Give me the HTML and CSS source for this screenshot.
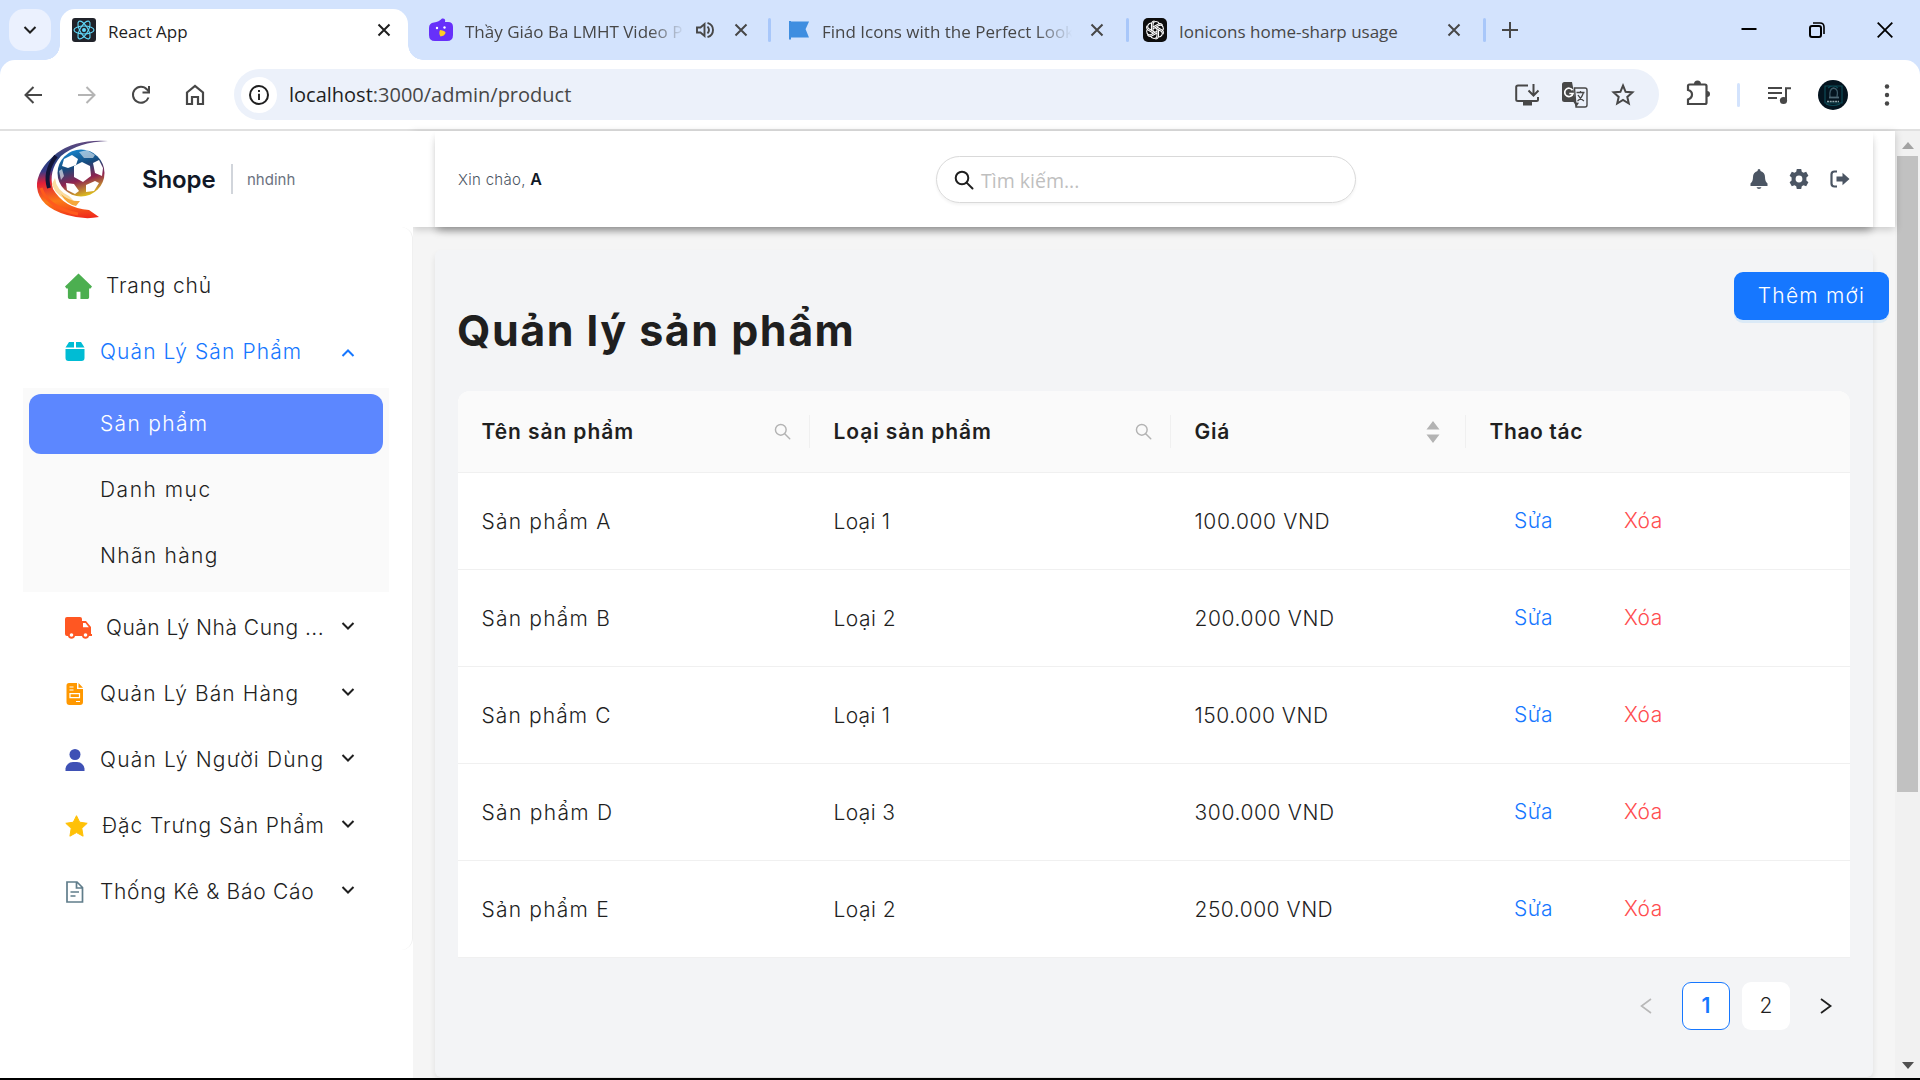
FILE: index.html
```html
<!DOCTYPE html>
<html lang="vi">
<head>
<meta charset="utf-8">
<title>React App</title>
<link rel="stylesheet" href="styles.css">
</head>
<body>
<svg class="defs" aria-hidden="true">
  <symbol id="close" viewBox="0 0 14 14"><path d="M1.5 1.5l11 11M12.5 1.5l-11 11" fill="none" stroke="currentColor" stroke-width="2"/></symbol>
  <symbol id="down" viewBox="0 0 14 10"><path d="M1.5 2l5.5 5.5L12.500 2" fill="none" stroke="currentColor" stroke-width="2"/></symbol>
  <symbol id="lens" viewBox="0 0 20 20"><circle cx="8" cy="8" r="6.300" fill="none" stroke="currentColor" stroke-width="var(--w,2)"/><path d="M12.600 12.600L18.500 18.500" stroke="currentColor" stroke-width="var(--w,2)" stroke-linecap="round"/></symbol>
</svg>

<header class="tabstrip">
  <div class="tab-search"><svg width="14" height="10"><use href="#down"/></svg></div>
  <div class="tab tab-active">
    <svg class="fav" width="24" height="24" viewBox="0 0 24 24"><rect width="24" height="24" rx="3" fill="#20232a"/><g fill="none" stroke="#61dafb" stroke-width="1.100"><ellipse cx="12" cy="12" rx="10" ry="4"/><ellipse cx="12" cy="12" rx="10" ry="4" transform="rotate(60 12 12)"/><ellipse cx="12" cy="12" rx="10" ry="4" transform="rotate(120 12 12)"/></g><circle cx="12" cy="12" r="2" fill="#61dafb"/></svg>
    <span class="tab-title">React App</span>
    <svg class="tab-close" width="14" height="14"><use href="#close"/></svg>
  </div>
  <div class="tab tab-two">
    <svg class="fav" width="24" height="24" viewBox="0 0 24 24"><path d="M5 4.500Q10 4 13 0.500Q17 0 16 4h3q5 0 5 5v8q0 6-6 6H6q-6 0-6-6v-7q0-5 5-5.500z" fill="#6730fa"/><path d="M11 12q6 1 5.500 3-1 3-5 3.500-2-3-.5-6.500z" fill="#ffcf24"/><circle cx="8" cy="10" r="1.200" fill="#fff"/><circle cx="15.500" cy="9.500" r="1.200" fill="#fff"/></svg>
    <span class="tab-title tab-faded">Thầy Giáo Ba LMHT Video P</span>
    <svg class="speaker" width="20" height="18" viewBox="0 0 20 18"><path d="M2 6.500h3.500L9.500 3v12l-4-3.500H2z" fill="none" stroke="#474747" stroke-width="1.900"/><path d="M12.500 5.500q3 3.500 0 7M12.500 1.800q5.500 1.700 5.500 7.200t-5.500 7.200" fill="none" stroke="#474747" stroke-width="1.900"/></svg>
    <svg class="tab-close" width="14" height="14"><use href="#close"/></svg>
  </div>
  <i class="tab-sep"></i>
  <div class="tab tab-three">
    <svg class="fav" width="19" height="20" viewBox="0 0 19 20"><path d="M1 1v18.500M1.500 2.500H18.500l-3 6.500 3 7.500H1.500z" fill="#3f8ee0" stroke="#3f8ee0" stroke-width="2"/></svg>
    <span class="tab-title tab-faded">Find Icons with the Perfect Look</span>
    <svg class="tab-close" width="14" height="14"><use href="#close"/></svg>
  </div>
  <i class="tab-sep"></i>
  <div class="tab tab-four">
    <svg class="fav" width="24" height="24" viewBox="0 0 24 24"><rect width="24" height="24" rx="5" fill="#0d0d0d"/><g fill="none" stroke="#fff" stroke-width="1.100"><path id="petal" d="M10 13V7Q10 3.500 13 3.500q2.500 0 3.500 2.500M10 9l5-2.800q3-1.500 4.600 1"/><use href="#petal" transform="rotate(60 12 12)"/><use href="#petal" transform="rotate(120 12 12)"/><use href="#petal" transform="rotate(180 12 12)"/><use href="#petal" transform="rotate(240 12 12)"/><use href="#petal" transform="rotate(300 12 12)"/></g></svg>
    <span class="tab-title">Ionicons home-sharp usage</span>
    <svg class="tab-close" width="14" height="14"><use href="#close"/></svg>
  </div>
  <i class="tab-sep"></i>
  <svg class="new-tab" width="16" height="16" viewBox="0 0 16 16"><path d="M8 0v16M0 8h16" stroke="#474747" stroke-width="2"/></svg>
  <div class="window-controls">
    <span><svg width="16" height="16" viewBox="0 0 16 16"><path d="M0.500 7h15" stroke="#000" stroke-width="2"/></svg></span>
    <span><svg width="16" height="16" viewBox="0 0 16 16"><rect x="1" y="4" width="11" height="11" rx="2" fill="none" stroke="#000" stroke-width="2"/><path d="M4 1h7q4 0 4 4v7" fill="none" stroke="#000" stroke-width="1.600"/></svg></span>
    <span><svg width="16" height="16" viewBox="0 0 16 16"><path d="M.7.7l14.600 14.600M15.300.7L.7 15.300" stroke="#000" stroke-width="1.800"/></svg></span>
  </div>
</header>

<nav class="toolbar">
  <span class="tool"><svg width="18" height="18" viewBox="0 0 18 18"><path d="M18 9H2M9.500 1L1.500 9l8 8" fill="none" stroke="#474747" stroke-width="2"/></svg></span>
  <span class="tool tool-off"><svg width="18" height="18" viewBox="0 0 18 18"><path d="M0 9h16M8.500 1l8 8-8 8" fill="none" stroke="#474747" stroke-width="2"/></svg></span>
  <span class="tool"><svg width="20" height="20" viewBox="0 0 20 20"><path d="M17.500 12.500A8 8 0 1 1 16 4.500L18 7" fill="none" stroke="#474747" stroke-width="2"/><path d="M18 1v6.500h-6.500" fill="none" stroke="#474747" stroke-width="2"/></svg></span>
  <span class="tool"><svg width="20" height="22" viewBox="0 0 20 22"><path d="M2 8.500L10 2l8 6.500V20h-5v-7H7v7H2z" fill="none" stroke="#474747" stroke-width="2.200"/></svg></span>
  <div class="omnibox">
    <span class="site-info"><svg width="20" height="20" viewBox="0 0 20 20"><circle cx="10" cy="10" r="9" fill="none" stroke="#1f1f1f" stroke-width="2"/><path d="M10 8.700V15M10 5v2" stroke="#1f1f1f" stroke-width="1.900"/></svg></span>
    <span class="url"><b>localhost</b>:3000/admin/product</span>
    <span class="omni-icon"><svg width="24" height="22" viewBox="0 0 24 22"><path d="M13 1.500H3Q1.200 1.500 1.200 3v12.500Q1.200 17 3 17h18.500q1.500 0 1.500-1.500V13M18.500 0v11M13.500 6.500l5 5 5-5" fill="none" stroke="#474747" stroke-width="2"/><path d="M8 18h9v3.500H8z" fill="#474747"/></svg></span>
    <span class="omni-icon"><svg width="26" height="26" viewBox="0 0 26 26"><path d="M12.500 6H23q2 0 2 2v15q0 2-2 2H14z" fill="none" stroke="#474747" stroke-width="1.400"/><path d="M14.500 10.500h8M18.500 9v1.500M21.500 10.500q-2 6-6 8.500M16 13q2 4 6 6" fill="none" stroke="#474747" stroke-width="1.300"/><path d="M2.500 0H10l4 20.500 3 .3-2.500 4-3-4.800h-9Q0 20 0 17.500v-15Q0 0 2.500 0z" fill="#474747"/><path d="M10.500 8.200A4.200 4.200 0 1 0 11 11.500H7.300" fill="none" stroke="#fff" stroke-width="1.700"/></svg></span>
    <span class="omni-icon"><svg width="24" height="23" viewBox="0 0 24 23"><path d="M12 2.500l2.600 6.300 6.800.6-5.100 4.500 1.500 6.600-5.800-3.500-5.800 3.500 1.500-6.600-5.100-4.500 6.800-.6z" fill="none" stroke="#474747" stroke-width="2"/></svg></span>
  </div>
  <span class="tool tool-ext"><svg width="24" height="26" viewBox="1 1.500 24 26"><path d="M3 5.500Q3 4 4.500 4H20q1.500 0 1.500 1.500V22q0 1.500-1.500 1.500H3V19q4-1.500 4-5t-4-4.500z" fill="none" stroke="#474747" stroke-width="2.200"/><path d="M9 3.500a3.500 3.500 0 0 1 7 0zM22 10.500a3 3 0 0 1 0 6z" fill="#474747"/></svg></span>
  <i class="tool-sep"></i>
  <span class="tool"><svg width="22" height="22" viewBox="0 -1 22 22"><path d="M0 3h14M0 8h14M0 13h9M18 16V3.200h5" fill="none" stroke="#474747" stroke-width="2"/><circle cx="15.500" cy="15.500" r="3.600" fill="#474747"/></svg></span>
  <span class="tool"><svg width="30" height="30" viewBox="0 0 30 30"><circle cx="15" cy="15" r="15" fill="#04141f"/><path d="M7 6h17v17H7zM10 8q5-4 10 0M8 24q7 3 14 0" fill="none" stroke="#0d4a56" stroke-width="1.200"/><path d="M12 17q-1-8 3.500-9Q21 9 19 17" fill="none" stroke="#3d5b68" stroke-width="1.300"/><path d="M11 17.500h10" stroke="#4c6673" stroke-width="1.800"/><path d="M9 21.500h12" stroke="#8fa6ac" stroke-width="1.400" stroke-dasharray="2 .7"/></svg></span>
  <span class="tool"><svg width="6" height="22" viewBox="0 0 6 22"><g fill="#474747"><circle cx="3" cy="2.500" r="2.200"/><circle cx="3" cy="11" r="2.200"/><circle cx="3" cy="19.500" r="2.200"/></g></svg></span>
</nav>

<div class="viewport">
  <aside class="sidebar">
    <div class="brand">
      <svg class="logo" width="76" height="82" viewBox="0 0 76 82">
        <defs>
          <linearGradient id="sw" x1=".5" y1="0" x2=".6" y2="1"><stop offset="0" stop-color="#6b4a80"/><stop offset=".2" stop-color="#27407f"/><stop offset=".35" stop-color="#3a3a86"/><stop offset=".5" stop-color="#e01f38"/><stop offset=".75" stop-color="#fb7a16"/><stop offset="1" stop-color="#f02c1c"/></linearGradient>
          <linearGradient id="bl" x1=".3" y1="0" x2=".6" y2="1"><stop offset="0" stop-color="#1787cf"/><stop offset=".35" stop-color="#164a7c"/><stop offset=".65" stop-color="#8e2350"/><stop offset="1" stop-color="#e0c51c"/></linearGradient>
        </defs>
        <path d="M72 3Q40 1 21 15Q0 32 1 49Q3 69 31 77Q48 82 63 79L53 72Q28 70 17 51Q12 33 25 18Q42 4 72 3z" fill="url(#sw)"/>
        <path d="M20 18Q8 34 13 50" fill="none" stroke="#111437" stroke-width="4"/>
        <path d="M5 50Q12 70 42 76" fill="none" stroke="#ff5a1c" stroke-width="3"/>
        <path d="M16 46Q20 60 41 66L33 58Q20 52 19 40z" fill="#fbdca0"/>
        <path d="M25 56Q34 64 44 63L40 68Q30 66 25 56z" fill="#f5a73a"/>
        <circle cx="45" cy="35" r="23.500" fill="url(#bl)"/>
        <g fill="#fff" transform="translate(-1 1)"><path d="M39 27l8-4 8 4 1 10-8 6-9-5z"/><path d="M29 20l8-4 6 4-2 6-8 3-6-2z"/><path d="M58 24l6-3 4 8-1 8-7-3z"/><path d="M44 13l8-2 8 5-2 3-9 0z" opacity=".55"/><path d="M31 44l8 1 5 7-4 3-8-4z"/><path d="M51 46l9-4 4 2-5 8-8 1z"/><path d="M24 32l3-2 2 7-3 4z" opacity=".6"/></g>
      </svg>
      <strong class="brand-name">Shope</strong>
      <span class="brand-user">nhdinh</span>
    </div>
    <ul class="menu">
      <li class="item home"><svg width="28" height="27" viewBox="0 0 28 27"><path d="M14 0l14 13.500-1.500 2H25V25q0 1.500-1.500 1.500H16V19h-4v7.500H4.500Q3 26.500 3 25v-9.500H1.500L0 13.500z" fill="#4caf50"/></svg><span class="label k8">Trang chủ</span></li>
      <li class="item open"><svg width="20" height="20" viewBox="0 0 20 20"><path d="M4 0h5v5.500H.5zM11 0h5l3.500 5.500H11zM.5 7h19v9q0 3-3 3h-13q-3 0-3-3z" fill="#00bcd4"/></svg><span class="label k11">Quản Lý Sản Phẩm</span><svg class="chev up" width="14" height="10"><use href="#down"/></svg></li>
      <li class="submenu">
        <div class="sub selected k13">Sản phẩm</div>
        <div class="sub k15">Danh mục</div>
        <div class="sub k13">Nhãn hàng</div>
      </li>
      <li class="item truck"><svg width="27" height="22" viewBox="0 0 27 22"><path d="M2 0h13q2 0 2 2v2h4l5 6v7h1v2h-3a3.600 3.600 0 0 1-7 0h-7a3.600 3.600 0 0 1-7 0H2q-2 0-2-2V2q0-2 2-2z" fill="#ff5722"/><path d="M18 6h2.500l3.300 4.300H18z" fill="#fff"/><circle cx="6.500" cy="18" r="1.800" fill="#fff"/><circle cx="20.500" cy="18" r="1.800" fill="#fff"/></svg><span class="label k5">Quản Lý Nhà Cung ...</span><svg class="chev" width="14" height="10"><use href="#down"/></svg></li>
      <li class="item"><svg width="20" height="22" viewBox="0 0 20 22"><path d="M4 0h8v6h6v13q0 3-3 3H4.500q-3 0-3-3V2.500Q1.500 0 4 0zM13.500 0L18 4.800h-4.500z" fill="#ff9800"/><path d="M4.500 4h4M4.500 7h4M11 18.500h4M5 10.700h9.500v4H5z" fill="none" stroke="#fff" stroke-width="1.200"/></svg><span class="label k11">Quản Lý Bán Hàng</span><svg class="chev" width="14" height="10"><use href="#down"/></svg></li>
      <li class="item"><svg width="20" height="22" viewBox="0 0 20 22"><circle cx="10" cy="5.500" r="5.500" fill="#3f51b5"/><path d="M.5 22v-2.500Q2 13 8 13h4q6 0 7.500 6.500V22z" fill="#3f51b5"/></svg><span class="label k12">Quản Lý Người Dùng</span><svg class="chev" width="14" height="10"><use href="#down"/></svg></li>
      <li class="item star"><svg width="23" height="22" viewBox="0 0 23 22"><path d="M11.500 0.700l3.200 6.500 7.500 1.100-5.400 5 1.300 7.900-6.600-3.600-6.600 3.600 1.300-7.900-5.400-5 7.500-1.100z" fill="#ffc107" stroke="#ffc107" stroke-linejoin="round"/></svg><span class="label k9">Đặc Trưng Sản Phẩm</span><svg class="chev" width="14" height="10"><use href="#down"/></svg></li>
      <li class="item"><svg width="20" height="22" viewBox="0 0 20 22"><path d="M2 1h10l5.500 5.500V21H2zM11.500 1v6h6M5.500 11h8.500M5.500 15h5" fill="none" stroke="#607d8b" stroke-width="1.700"/></svg><span class="label k7">Thống Kê &amp; Báo Cáo</span><svg class="chev" width="14" height="10"><use href="#down"/></svg></li>
    </ul>
  </aside>

  <div class="main">
    <div class="topbar">
      <div class="topbar-card">
        <div class="hello">Xin chào, <b>A</b></div>
        <div class="search"><svg width="20" height="20"><use href="#lens"/></svg><span>Tìm kiếm...</span></div>
        <div class="actions">
          <svg width="18" height="20" viewBox="0 0 18 20"><path d="M9 0q1.500 0 1.500 2Q15 3.500 15 8q0 4.500 2.500 6.500V17H.5v-2.500Q3 12.500 3 8q0-4.500 4.500-6Q7.500 0 9 0zM6.500 18.300h5Q11 20 9 20t-2.500-1.700z"/></svg>
          <svg width="20" height="20" viewBox="0 0 20 20"><path fill-rule="evenodd" d="M7.800 0h4.400l.6 2.700 1.700 1 2.700-.9 2.200 3.900-2 1.900v2.800l2 1.900-2.200 3.900-2.700-.9-1.700 1-.6 2.700H7.800l-.6-2.700-1.700-1-2.700.9-2.200-3.900 2-1.900V8.600l-2-1.900 2.200-3.900 2.700.9 1.700-1zM10 6.600a3.400 3.400 0 1 0 0 6.800 3.400 3.400 0 0 0 0-6.800z"/></svg>
          <svg width="20" height="18" viewBox="0 0 20 18"><path d="M7 1.500H4.500q-3 0-3 3v9q0 3 3 3H7" fill="none" stroke="#4b5563" stroke-width="2.200"/><path d="M6.500 6.500h6V2.700L19.500 9l-7 6.300v-3.800h-6z"/></svg>
        </div>
      </div>
    </div>
    <div class="content">
      <section class="card">
        <button class="add">Thêm mới</button>
        <h1 class="title">Quản lý sản phẩm</h1>
        <div class="table">
          <div class="row head">
            <div class="cell"><span class="k9">Tên sản phẩm</span><svg class="filter" width="17" height="17"><use href="#lens"/></svg></div>
            <div class="cell"><span class="k9">Loại sản phẩm</span><svg class="filter" width="17" height="17"><use href="#lens"/></svg></div>
            <div class="cell"><span class="k7">Giá</span><svg class="sorter" width="14" height="22" viewBox="0 0 14 22"><path d="M7 0l6.500 8.500H.5zM7 22l6.500-8.500H.5z" fill="#b3b3b3"/></svg></div>
            <div class="cell"><span class="k6">Thao tác</span></div>
          </div>
          <div class="row"><div class="cell k12">Sản phẩm A</div><div class="cell k3">Loại 1</div><div class="cell k6">100.000 VND</div><div class="cell links"><a class="edit">Sửa</a><a class="del">Xóa</a></div></div>
          <div class="row"><div class="cell k12">Sản phẩm B</div><div class="cell k5">Loại 2</div><div class="cell k6">200.000 VND</div><div class="cell links"><a class="edit">Sửa</a><a class="del">Xóa</a></div></div>
          <div class="row"><div class="cell k11">Sản phẩm C</div><div class="cell k3">Loại 1</div><div class="cell k5">150.000 VND</div><div class="cell links"><a class="edit">Sửa</a><a class="del">Xóa</a></div></div>
          <div class="row"><div class="cell k13">Sản phẩm D</div><div class="cell k4">Loại 3</div><div class="cell k6">300.000 VND</div><div class="cell links"><a class="edit">Sửa</a><a class="del">Xóa</a></div></div>
          <div class="row"><div class="cell k12">Sản phẩm E</div><div class="cell k5">Loại 2</div><div class="cell k5">250.000 VND</div><div class="cell links"><a class="edit">Sửa</a><a class="del">Xóa</a></div></div>
        </div>
        <div class="pager">
          <span class="page arrow off"><svg width="12" height="16" viewBox="0 0 12 16"><path d="M11 1L1.500 8 11 15" fill="none" stroke="currentColor" stroke-width="1.600"/></svg></span>
          <span class="page current">1</span>
          <span class="page">2</span>
          <span class="page arrow"><svg width="12" height="16" viewBox="0 0 12 16"><path d="M1 1l9.500 7L1 15" fill="none" stroke="currentColor" stroke-width="1.800"/></svg></span>
        </div>
      </section>
    </div>
  </div>

  <div class="scrollbar">
    <svg width="12" height="7" viewBox="0 0 12 7"><path d="M6 0l6 7H0z" fill="#a3a3a3"/></svg>
    <i class="thumb"></i>
    <svg class="sb-down" width="12" height="7" viewBox="0 0 12 7"><path d="M6 7L0 0h12z" fill="#505050"/></svg>
  </div>
</div>
</body>
</html>
```
FILE: styles.css
```css
* { box-sizing: border-box; }
body {
  margin: 0;
  width: 1920px;
  height: 1080px;
  overflow: hidden;
  display: flex;
  flex-direction: column;
  background: #000;
  color: #1f1f1f;
  font: 350 21px/30px Inter, "Open Sans", sans-serif;
}
.defs { display: none; }
svg { flex: none; display: block; overflow: visible; }

/* letter tracking steps, in tenths of a pixel */
.k3 { letter-spacing: .3px; }
.k4 { letter-spacing: .4px; }
.k5 { letter-spacing: .5px; }
.k6 { letter-spacing: .6px; }
.k7 { letter-spacing: .7px; }
.k8 { letter-spacing: .8px; }
.k9 { letter-spacing: .92px; }
.k11 { letter-spacing: 1.1px; }
.k12 { letter-spacing: 1.2px; }
.k13 { letter-spacing: 1.3px; }
.k15 { letter-spacing: 1.5px; }

/* browser tabs */
.tabstrip {
  height: 60px;
  flex: none;
  display: flex;
  align-items: center;
  background: #d3e3fd;
  font: 400 17px/24px "Open Sans", sans-serif;
  color: #474747;
}
.tab-search {
  width: 42px;
  height: 42px;
  margin: 0 9px;
  border-radius: 15px;
  background: #ebf1fe;
  display: grid;
  place-items: center;
  color: #1f1f1f;
}
.tab { display: flex; align-items: center; height: 51px; padding-bottom: 9px; align-self: flex-end; }
.tab-active {
  position: relative;
  width: 348px;
  padding-left: 12px;
  background: #fff;
  border-radius: 15px 15px 0 0;
  color: #1f1f1f;
}
.tab-active::before, .tab-active::after {
  content: "";
  position: absolute;
  bottom: 0;
  width: 15px;
  height: 15px;
}
.tab-active::before { left: -15px; background: radial-gradient(circle at 0 0, transparent 14.5px, #fff 15px); }
.tab-active::after { right: -15px; background: radial-gradient(circle at 100% 0, transparent 14.5px, #fff 15px); }
.tab-two { width: 360px; padding-left: 21px; }
.tab-three { width: 355px; padding-left: 18px; }
.tab-four { width: 354px; padding-left: 14px; }
.tab-title { flex: 1; margin-left: 12px; white-space: nowrap; padding-top: 3px; min-width: 0; }
.tab-three .tab-title { margin-left: 14px; }
.tab-faded { mask-image: linear-gradient(90deg, #000 calc(100% - 36px), transparent); }
.tab-close { margin: 0 17px 0 16px; }
.tab-three .tab-close { margin: 0 22px 0 16px; }
.tab-three .tab-title { margin-right: 2px; }
.tab-two .tab-close { margin: 0 20px 0 19px; }
.tab-four .tab-close { margin-right: 22px; }
.speaker { margin-left: 10px; }
.tab-sep { width: 3px; height: 24px; border-radius: 2px; background: #a8c7fa; }
.new-tab { margin-left: 16px; }
.window-controls { margin-left: auto; margin-right: 1px; display: flex; }
.window-controls span { width: 68px; display: grid; place-items: center; }

/* address row */
.toolbar {
  position: relative;
  height: 71px;
  flex: none;
  display: flex;
  align-items: center;
  padding-left: 6px;
  background: #d3e3fd;
  border-bottom: 2px solid #e0e0e0;
}
.toolbar::before {
  content: "";
  position: absolute;
  inset: 0;
  background: #fff;
  border-radius: 15px 15px 0 0;
}
.toolbar > * { position: relative; }
.tool { width: 54px; display: grid; place-items: center; }
.tool-off { opacity: .4; }
.omnibox {
  width: 1425px;
  height: 51px;
  margin: 0 12px;
  padding: 0 12px 0 7px;
  border-radius: 26px;
  background: #ecf1fa;
  display: flex;
  align-items: center;
}
.site-info { width: 36px; height: 36px; border-radius: 50%; background: #fff; display: grid; place-items: center; }
.url { flex: 1; margin-left: 12px; font: 400 20px/30px "Open Sans", sans-serif; color: #474747; }
.url b { font-weight: 400; color: #1f1f1f; }
.omni-icon { width: 48px; display: grid; place-items: center; }
.tool-sep { width: 3px; height: 24px; margin: 0 12px; background: #d3e3fd; border-radius: 2px; }

/* page */
.viewport { height: 947px; display: flex; background: #f5f5f5; }
.sidebar { position: relative; z-index: 2; width: 413px; background: #fff; }
.brand { height: 96px; display: flex; align-items: center; padding-left: 36px; }
.brand-name { width: 89px; margin-left: 30px; padding-top: 1px; font-size: 24px; font-weight: 600; color: #111827; letter-spacing: -.1px; }
.brand-user {
  height: 30px;
  padding-left: 14px;
  border-left: 2px solid #d1d5db;
  font-size: 15px;
  line-height: 31px;
  font-weight: 400;
  color: #6b7280;
}
.menu {
  list-style: none;
  height: 723px;
  margin: 0;
  padding: 29px 23px 0;
  border-right: 1px solid #f0f0f0;
  border-radius: 0 12px 12px 0;
}
.item { position: relative; height: 60px; margin-bottom: 6px; padding: 0 34px 0 42px; display: flex; align-items: center; }
.item .label { margin-left: 15px; white-space: nowrap; }
.home, .truck { padding-left: 42px; }
.home svg { width: 27px; }
.home .label { margin-left: 14px; }
.truck .label { margin-left: 14px; }
.star .label { margin-left: 14px; }
.chev { margin-left: auto; position: relative; top: -2px; }
.chev.up { transform: rotate(180deg); top: 1px; }
.open { color: #1677ff; }
.submenu { padding: 6px; margin-bottom: 6px; background: #fafafa; display: grid; gap: 6px; }
.sub { height: 60px; padding-left: 71px; line-height: 60px; border-radius: 12px; }
.selected { background: #5c87ff; color: #fff; }

.main { width: 1482px; display: flex; flex-direction: column; }
.topbar { position: relative; z-index: 1; height: 96px; flex: none; padding: 0 22px; background: #fff; box-shadow: 0 2px 8px rgba(0, 0, 0, .2); }
.topbar-card {
  height: 96px;
  padding: 0 23px;
  display: grid;
  grid-template-columns: 478px 420px 1fr;
  align-items: center;
  background: #fff;
  box-shadow: 0 6px 9px -3px rgba(0, 0, 0, .3), 0 4px 6px rgba(0, 0, 0, .06);
  clip-path: inset(0 -10px -18px -10px);
}
.hello { font-size: 15px; color: #4b5563; letter-spacing: .3px; }
.hello b { font-weight: 600; font-size: 16px; color: #111827; }
.search {
  height: 47px;
  margin-top: 1px;
  padding-left: 17px;
  border: 1px solid #d9d9d9;
  border-radius: 24px;
  box-shadow: 0 2px 3px rgba(0, 0, 0, .05);
  display: flex;
  align-items: center;
  gap: 7px;
  font: 400 19.5px/30px "Open Sans", sans-serif;
  color: #bfbfbf;
}
.search span { padding-top: 2px; }
.search svg { color: #1f1f1f; }
.actions { display: flex; justify-content: flex-end; align-items: center; gap: 21px; color: #4b5563; fill: #4b5563; }

.content { flex: 1; padding: 23px 22px 0; }
.card {
  position: relative;
  height: 827px;
  padding: 55px 23px 0;
  background: #f3f4f6;
  border-radius: 6px;
  box-shadow: 0 4px 6px rgba(0, 0, 0, .09);
}
.add {
  position: absolute;
  right: -16px;
  top: 22px;
  width: 155px;
  height: 48px;
  padding: 0;
  border: 0;
  border-radius: 9px;
  background: #1677ff;
  box-shadow: 0 3px 0 rgba(5, 145, 255, .1);
  color: #fff;
  font: inherit;
  letter-spacing: 1.2px;
}
.title { margin: 0; height: 86px; font-size: 43px; line-height: 51px; font-weight: 700; letter-spacing: 1.5px; text-indent: -1px; }
.table { width: 1392px; background: #fff; border-radius: 12px 12px 0 0; overflow: hidden; }
.row { display: grid; grid-template-columns: 352px 361px 295px 384px; height: 97px; border-bottom: 1px solid #f0f0f0; }
.cell { padding: 2px 24px 0 23.5px; display: flex; align-items: center; }
.head { height: 82px; background: #fafafa; font-weight: 600; }
.head .cell { position: relative; padding-top: 0; justify-content: space-between; padding-right: 19px; }
.head .cell:not(:last-child)::after { content: ""; position: absolute; right: 0; width: 1px; height: 33px; background: #f0f0f0; }
.filter { --w: 1.7; color: #b3b3b3; }
.head .cell:nth-child(3) { padding-right: 26px; }
.cell.links { padding: 0 0 0 48px; gap: 71px; letter-spacing: .4px; }
.edit { color: #1677ff; }
.del { color: #ff4d4f; }
.pager { margin-top: 24px; display: flex; justify-content: flex-end; gap: 12px; }
.page { width: 48px; height: 48px; border-radius: 9px; background: #fff; display: grid; place-items: center; }
.current { border: 1px solid #1677ff; color: #1677ff; font-weight: 600; }
.arrow { background: none; }
.off { color: #b8b8b8; }

.scrollbar { width: 25px; padding: 11px 0 9px; background: #f1f1f1; display: flex; flex-direction: column; align-items: center; }
.thumb { width: 21px; height: 636px; margin-top: 7px; background: #c1c1c1; }
.sb-down { margin-top: auto; }
```
